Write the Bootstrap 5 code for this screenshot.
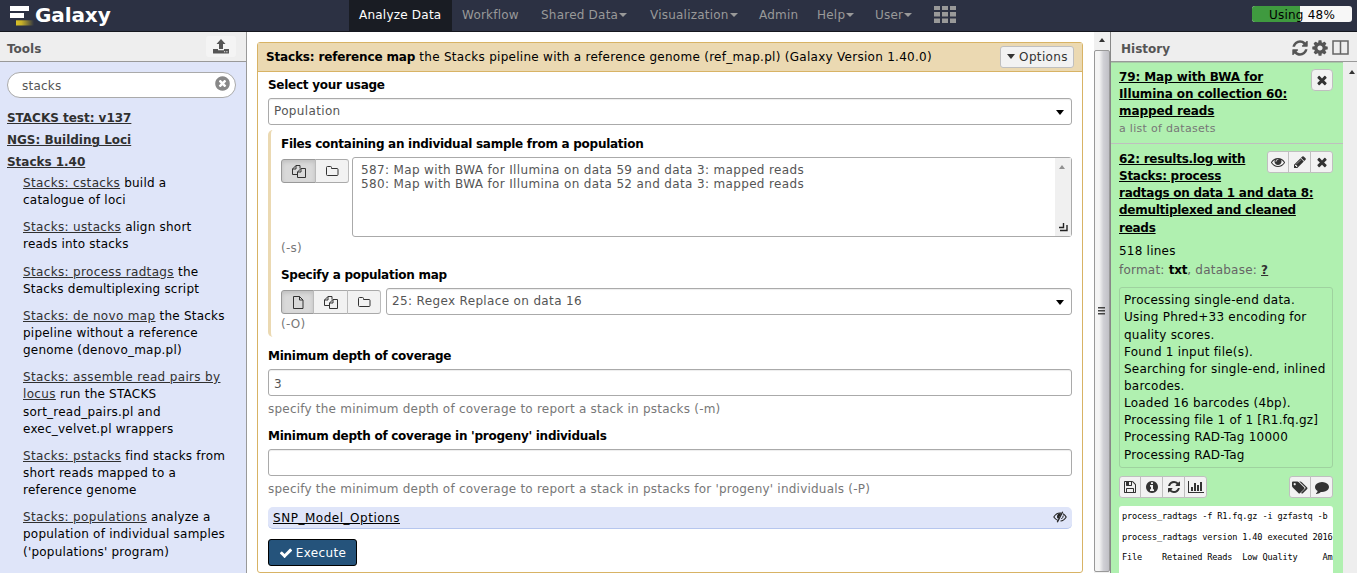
<!DOCTYPE html>
<html lang="en">
<head>
<meta charset="utf-8">
<meta name="viewport" content="width=device-width, initial-scale=1">
<title>Galaxy</title>
<link href="https://cdn.jsdelivr.net/npm/bootstrap@5.3.0/dist/css/bootstrap.min.css" rel="stylesheet">
<style>
body{font:12px/17.143px Verdana,"DejaVu Sans",sans-serif;letter-spacing:.22px;color:#000;background:#fff;height:573px;overflow:hidden}
svg{display:block;fill:currentColor}
.masthead{height:32px;background:#2c3143;border-bottom:1px solid #15171f}
.brand-name{font-size:20px;font-weight:700;line-height:30px;color:#fff;margin-left:1px;letter-spacing:-.1px}
.brand-side{width:349px;padding-left:9px}
.topnav .nav-link{color:#999;padding:0 0 0 10px;line-height:31px;height:31px;white-space:nowrap}
.topnav .nav-link.active{color:#fff;background:#191c23}
.w-a{width:103px}.w-b{width:79px}.w-c{width:109px}.w-d{width:58px}.w-e{width:59px}
.tri{display:inline-block;border:4px solid transparent;border-top-color:currentColor;border-bottom:0;vertical-align:2px;margin-left:1px}
.tri-lg{border-width:5px 4.5px 0}
.quota{width:100px;height:16px;background:#f7f7f7;border-radius:3px;margin:6px 5px 0 0;position:relative;font-size:12px}
.quota .progress-bar{background:#3f9a3f}
.quota-text{position:absolute;inset:0;text-align:center;line-height:19px;color:#000}
.workspace{height:541px}
.tools{width:247px;background:#dfe5f9;border-right:1px solid #999}
.panel-head{height:30px;background:#eee;border-bottom:1px solid #999;color:#555;font-weight:700;padding-top:9px;letter-spacing:0}
.upload-btn{width:30px;height:21px;background:#f4f4f4;border-radius:3px;margin:-5px 10px 0 0;padding:3px 0 0 7px}
.search-box{height:26px;border:1px solid #aaa;border-radius:13px;background:#fff;color:#555;margin:10px 10px 0 7px;padding:0 4px 0 14px}
.tool-cats{margin:9px 0 2px 7px;font-weight:700;line-height:22px;letter-spacing:-.02px}
.tool-cats a,.tool-item a{color:#303030;text-decoration:underline}
.tool-item a{letter-spacing:.34px}
.tool-item{margin:0 10px 10px 23px;white-space:nowrap}
.center{width:847px;padding:10px 11px 0 10px}
.toolform{height:531px;border:1px solid #d8b365;border-radius:3px}
.toolform-head{height:29px;background:#ebd9b2;border-bottom:1px solid #d8b365;padding:0 8px}
.tf-title{letter-spacing:.28px;padding-top:2px}
.tf-title b{letter-spacing:-.15px}
.btn-g{background:#f2f2f2;border:1px solid #bfbfbf;color:#333;border-radius:3px;font-size:12px;line-height:20px;padding:0}
.opt-btn{width:74px;letter-spacing:.35px}
.toolform-body{padding:4px 10px 0}
.lbl{font-weight:700;height:17px;line-height:19px;margin-bottom:5px;letter-spacing:-.27px}
.field{height:27px;border:1px solid #aaa;border-radius:3px;color:#555;padding:1px 7px 0 5px;box-shadow:inset 0 1px 1px rgba(0,0,0,.075);letter-spacing:.35px}
.hint{color:#777;height:17px;line-height:19px}
.nested{border-left:3px solid #ebd9b2;border-radius:5px 0 0 5px;padding:5px 0 5px 10px;margin:5px 0 10px;height:207px}
.multi{height:80px;border:1px solid #aaa;border-radius:3px;color:#555;margin-left:3px}
.multi-opts{padding:5px 8px;line-height:14px;letter-spacing:.35px}
.multi-bar{width:16px;background:#f0f0f0;padding:7px 0 4px 4px}
.seg{height:24px;margin-top:2px}
.seg .btn-g{padding:0;display:flex;align-items:center;justify-content:center;border-color:#aaa #bbb}
.seg .on{background:#d9d9d9;border-color:#999;box-shadow:inset 0 2px 4px rgba(0,0,0,.12)}
.snp{height:22px;background:#dfe5f9;border-bottom:1px solid #b6c6ee;border-radius:5px;margin:10px 0;padding:2px 5px 0 5px}
.snp a{color:#000;letter-spacing:.52px}
.exec{width:89px;height:27px;background:#25537b;border:1px solid #000;border-radius:3px;color:#fff;font-size:12px;padding:1px 0 0;letter-spacing:.35px}
.vbar{width:16px;background:#f0f0f0;padding-top:6px}
.vthumb{height:522px;margin-top:8px;border:1px solid #999;border-radius:2px;background:linear-gradient(90deg,#f5f5f5 30%,#d0d0d5 60%,#c0c0c6);color:#444;padding:256px 0 0 3px}
.uptri{display:block;width:0;border:3.5px solid transparent;border-bottom:4px solid #333;border-top:0;margin-left:5px}
.history{width:247px;border-left:1px solid #888;background:#eee}
.hist-scroll{width:14px;padding:8px 0 0 1px}
.hist-list{width:232px;background:#b0f0b0;height:511px}
.ds-one{height:82px;border-bottom:1px solid #bfbfbf;padding:6px 10px 0 8px;border-top:1px solid #a5c9a5}
.ds-two{padding:7px 10px 0 8px}
.ds-title{color:#000;font-weight:700;text-decoration:underline;white-space:nowrap;letter-spacing:-.26px}
.t-wide{letter-spacing:-.1px}
.bset{height:22px}
.bset .btn-g{width:22px;height:22px;flex:none;display:flex;align-items:center;justify-content:center}
.bset .btn-g+.btn-g{width:23px}
.peek{border:1px solid #9fd29f;border-radius:3px;height:181px;padding:4px;white-space:nowrap;margin-top:8px}
.cmd{font:8.6px/20.5px "DejaVu Sans Mono",monospace;letter-spacing:-.16px;background:#fff;height:70px;border-radius:3px 3px 0 0;margin:8px 0 0;padding:0 0 0 3px;overflow:hidden}
</style>
</head>
<body>
<svg class="d-none" xmlns="http://www.w3.org/2000/svg">
<symbol id="i-x" viewBox="0 0 1792 1792"><path d="M1490 1322q0 40-28 68l-136 136q-28 28-68 28t-68-28l-294-294-294 294q-28 28-68 28t-68-28l-136-136q-28-28-28-68t28-68l294-294-294-294q-28-28-28-68t28-68l136-136q28-28 68-28t68 28l294 294 294-294q28-28 68-28t68 28l136 136q28 28 28 68t-28 68l-294 294 294 294q28 28 28 68z"/></symbol>
<symbol id="i-check" viewBox="0 0 1792 1792"><path d="M1671 566q0 40-28 68l-724 724-136 136q-28 28-68 28t-68-28l-136-136-362-362q-28-28-28-68t28-68l136-136q28-28 68-28t68 28l294 295 656-657q28-28 68-28t68 28l136 136q28 28 28 68z"/></symbol>
<symbol id="i-refresh" viewBox="0 0 1792 1792"><path d="M1639 1056q0 5-1 7-64 268-268 434.5t-478 166.5q-146 0-282.5-55t-243.5-157l-129 129q-19 19-45 19t-45-19-19-45v-448q0-26 19-45t45-19h448q26 0 45 19t19 45-19 45l-137 137q71 66 161 102t187 36q134 0 250-65t186-179q11-17 53-117 8-23 30-23h192q13 0 22.5 9.5t9.5 22.5zm25-800v448q0 26-19 45t-45 19h-448q-26 0-45-19t-19-45 19-45l138-138q-148-137-349-137-134 0-250 65t-186 179q-11 17-53 117-8 23-30 23h-199q-13 0-22.5-9.5t-9.5-22.5v-7q65-268 270-434.5t480-166.5q146 0 284 55.5t245 156.5l130-129q19-19 45-19t45 19 19 45z"/></symbol>
<symbol id="i-cog" viewBox="0 0 1792 1792"><path d="M1152 896q0-106-75-181t-181-75-181 75-75 181 75 181 181 75 181-75 75-181zm512-109v222q0 12-8 23t-20 13l-185 28q-19 54-39 91 35 50 107 138 10 12 10 25t-9 23q-27 37-99 108t-94 71q-12 0-26-9l-138-108q-44 23-91 38-16 136-29 186-7 28-36 28h-222q-14 0-24.5-8.5t-11.5-21.5l-28-184q-49-16-90-37l-141 107q-10 9-25 9-14 0-25-11-126-114-165-168-7-10-7-23 0-12 8-23 15-21 51-66.5t54-70.5q-27-50-41-99l-183-27q-13-2-21-12.5t-8-23.5v-222q0-12 8-23t19-13l186-28q14-46 39-92-40-57-107-138-10-12-10-24 0-10 9-23 26-36 98.5-107.5t94.5-71.5q13 0 26 10l138 107q44-23 91-38 16-136 29-186 7-28 36-28h222q14 0 24.5 8.5t11.5 21.5l28 184q49 16 90 37l142-107q9-9 24-9 13 0 25 10 129 119 165 170 7 8 7 22 0 12-8 23-15 21-51 66.5t-54 70.5q26 50 41 98l183 28q13 2 21 12.5t8 23.5z"/></symbol>
<symbol id="i-eye" viewBox="0 0 1792 1792"><path d="M1664 960q-152-236-381-353 61 104 61 225 0 185-131.5 316.5t-316.5 131.5-316.5-131.5-131.5-316.5q0-121 61-225-229 117-381 353 133 205 333.5 326.5t434.5 121.5 434.5-121.5 333.5-326.5zm-720-384q0-20-14-34t-34-14q-125 0-214.5 89.5t-89.5 214.5q0 20 14 34t34 14 34-14 14-34q0-86 61-147t147-61q20 0 34-14t14-34zm848 384q0 34-20 69-140 230-376.5 368.5t-499.5 138.5-499.5-139-376.5-368q-20-35-20-69t20-69q140-229 376.5-368t499.5-139 499.5 139 376.5 368q20 35 20 69z"/></symbol>
<symbol id="i-pencil" viewBox="0 0 1792 1792"><path d="M491 1536l91-91-235-235-91 91v107h128v128h107zm523-928q0-22-22-22-10 0-17 7l-542 542q-7 7-7 17 0 22 22 22 10 0 17-7l542-542q7-7 7-17zm-54-192l416 416-832 832h-416v-416zm683 96q0 53-37 90l-166 166-416-416 166-165q36-38 90-38 53 0 91 38l235 234q37 39 37 91z"/></symbol>
<symbol id="i-save" viewBox="0 0 1792 1792"><path d="M512 1536h768v-384h-768v384zm896 0h128v-896q0-14-10-38.5t-20-34.5l-281-281q-10-10-34-20t-39-10v416q0 40-28 68t-68 28h-576q-40 0-68-28t-28-68v-416h-128v1280h128v-416q0-40 28-68t68-28h832q40 0 68 28t28 68v416zm-384-928v-320q0-13-9.5-22.5t-22.5-9.5h-192q-13 0-22.5 9.5t-9.5 22.5v320q0 13 9.5 22.5t22.5 9.5h192q13 0 22.5-9.5t9.5-22.5zm640 32v928q0 40-28 68t-68 28h-1344q-40 0-68-28t-28-68v-1344q0-40 28-68t68-28h928q40 0 88 20t76 48l280 280q28 28 48 76t20 88z"/></symbol>
<symbol id="i-info" viewBox="0 0 1792 1792"><path d="M1152 1376v-160q0-14-9-23t-23-9h-96v-512q0-14-9-23t-23-9h-320q-14 0-23 9t-9 23v160q0 14 9 23t23 9h96v320h-96q-14 0-23 9t-9 23v160q0 14 9 23t23 9h448q14 0 23-9t9-23zm-128-896v-160q0-14-9-23t-23-9h-192q-14 0-23 9t-9 23v160q0 14 9 23t23 9h192q14 0 23-9t9-23zm640 416q0 209-103 385.5t-279.5 279.5-385.5 103-385.5-103-279.5-279.5-103-385.5 103-385.5 279.5-279.5 385.5-103 385.5 103 279.5 279.5 103 385.5z"/></symbol>
<symbol id="i-chart" viewBox="0 0 2048 1792"><path d="M640 896v512h-256v-512h256zm384-512v1024h-256v-1024h256zm1024 1152v128h-2048v-1536h128v1408h1920zm-640-896v768h-256v-768h256zm384-384v1152h-256v-1152h256z"/></symbol>
<symbol id="i-clear" viewBox="0 0 1792 1792"><path d="M1277 1122q0-26-19-45l-181-181 181-181q19-19 19-45 0-27-19-46l-90-90q-19-19-46-19-26 0-45 19l-181 181-181-181q-19-19-45-19-27 0-46 19l-90 90q-19 19-19 46 0 26 19 45l181 181-181 181q-19 19-19 45 0 27 19 46l90 90q19 19 46 19 26 0 45-19l181-181 181 181q19 19 45 19 27 0 46-19l90-90q19-19 19-46zm387-226q0 209-103 385.5t-279.5 279.5-385.5 103-385.5-103-279.5-279.5-103-385.5 103-385.5 279.5-279.5 385.5-103 385.5 103 279.5 279.5 103 385.5z"/></symbol>
<symbol id="i-comment" viewBox="0 0 1792 1792"><path d="M1792 896q0 174-120 321.5t-326 233-450 85.5q-70 0-145-8-198 175-460 242-49 14-114 22-17 2-30.5-9t-17.5-29v-1q-3-4-.5-12t2-10 4.5-9.500l6-9 7-8.500 8-9q7-8 31-34.500t34.500-38 31-39.500 32.500-51 27-59 26-76q-157-89-247.500-220t-90.500-281q0-130 71-248.500t191-204.500 286-136.500 348-50.500q244 0 450 85.500t326 233 120 321.500z"/></symbol>
<symbol id="i-tags" viewBox="0 0 16 13"><path fill-rule="evenodd" d="M0 1.500Q0 .5 1 .5h4.300q.8 0 1.500.7l5.400 5.400q.6.7 0 1.300l-4.300 4.300q-.7.6-1.300 0L1 6.700Q0 5.800 0 5zM2.700 2a1.100 1.100 0 1 0 .01 0z"/><path d="M7.300.5h1q.8 0 1.500.7l5.400 5.400q.6.7 0 1.300l-4.300 4.300q-.7.6-1.500 0l-.3-.4 4.200-4.200q.6-.6 0-1.300z"/></symbol>
<symbol id="i-folder" viewBox="0 0 13 12"><path fill="none" stroke="currentColor" d="M.5 2.500q0-1 1-1h3q1 0 1 1v1h5.500q1 0 1 1v5q0 1-1 1h-9.500q-1 0-1-1z"/></symbol>
<symbol id="i-file" viewBox="0 0 12 13"><path fill="none" stroke="currentColor" d="M1.500.5h6l3.500 3.500v8.500h-9.500zM7.500.5v3.500h3.500"/></symbol>
<symbol id="i-files" viewBox="0 0 14 13"><path fill="none" stroke="currentColor" d="M5 9.500H.5V4L4 .5h4v3M.5 4H4V.5M5.500 7L9 3.500h4.500v9h-8zM5.500 7H9V3.500"/></symbol>
<symbol id="i-eyeoff" viewBox="0 0 14 12"><path fill="none" stroke="currentColor" stroke-width="1.100" d="M5 9.500Q2.500 8.500.8 6 3.200 2 7 2l1.300.1M10 2.800Q12 4 13.200 6 11 9.700 7.500 10"/><path d="M6.900 2.500a3 3 0 0 0-1.600 5.500L8 3z"/><path stroke="currentColor" stroke-width="1.300" d="M9.700.7L4.300 11.300"/><path fill="none" stroke="currentColor" d="M10.300 4.500Q10 7 8.300 8"/></symbol>
<symbol id="i-upload" viewBox="0 0 16 15"><path d="M8 0l4.500 5H10v5H6V5H3.500zM0 10h5v1.300h6V10h5v4q0 .5-.5.500H.5Q0 14.500 0 14z"/><path fill="#f4f4f4" d="M11 12.300h1.200v1H11zM13.300 12.300h1.200v1h-1.200z"/></symbol>
</svg>

<header class="masthead d-flex">
  <div class="brand-side d-flex">
    <svg class="mt-1" width="25" height="24" viewBox="0 0 25 24"><defs><linearGradient id="gold"><stop offset="0" stop-color="#d8c028"/><stop offset=".3" stop-color="#c8b128"/><stop offset="1" stop-color="#d8c028" stop-opacity="0"/></linearGradient></defs><path fill="#fff" d="M1 2h19v5H1zM1 9h14v5H1z"/><path fill="url(#gold)" d="M7 16.300h18v5.200H7z"/></svg>
    <span class="brand-name">Galaxy</span>
  </div>
  <nav class="topnav nav flex-nowrap">
    <a class="nav-link active w-a">Analyze Data</a><a class="nav-link w-b">Workflow</a><a class="nav-link w-c">Shared Data<i class="tri"></i></a><a class="nav-link w-c">Visualization<i class="tri"></i></a><a class="nav-link w-d">Admin</a><a class="nav-link w-d">Help<i class="tri"></i></a><a class="nav-link w-e">User<i class="tri"></i></a>
    <a class="nav-link"><svg class="mt-1" width="22" height="20" viewBox="0 0 22 20"><path d="M0 2h6v4H0zM8 2h6v4H8zM16 2h6v4h-6zM0 8h6v4.500H0zM8 8h6v4.500H8zM16 8h6v4.500h-6zM0 14.500h6v4.500H0zM8 14.500h6v4.500H8zM16 14.500h6v4.500h-6z"/></svg></a>
  </nav>
  <div class="quota ms-auto progress"><div class="progress-bar" style="width:48%"></div><span class="quota-text">Using 48%</span></div>
</header>

<div class="workspace d-flex">
  <aside class="tools flex-shrink-0 overflow-hidden">
    <div class="panel-head d-flex justify-content-between"><span style="margin-left:7px">Tools</span><span class="upload-btn"><svg width="16" height="15"><use href="#i-upload"/></svg></span></div>
    <div class="search-box d-flex align-items-center justify-content-between"><span class="pt-1">stacks</span><svg width="17" height="17" class="mb-1" color="#888"><use href="#i-clear"/></svg></div>
    <div class="tool-cats"><a href="#">STACKS test: v137</a><br><a href="#">NGS: Building Loci</a><br><a href="#">Stacks 1.40</a></div>
    <div class="tool-list">
      <div class="tool-item"><a href="#">Stacks: cstacks</a> build a<br>catalogue of loci</div>
      <div class="tool-item"><a href="#">Stacks: ustacks</a> align short<br>reads into stacks</div>
      <div class="tool-item"><a href="#">Stacks: process radtags</a> the<br>Stacks demultiplexing script</div>
      <div class="tool-item"><a href="#">Stacks: de novo map</a> the Stacks<br>pipeline without a reference<br>genome (denovo_map.pl)</div>
      <div class="tool-item"><a href="#">Stacks: assemble read pairs by<br>locus</a> run the STACKS<br>sort_read_pairs.pl and<br>exec_velvet.pl wrappers</div>
      <div class="tool-item"><a href="#">Stacks: pstacks</a> find stacks from<br>short reads mapped to a<br>reference genome</div>
      <div class="tool-item"><a href="#">Stacks: populations</a> analyze a<br>population of individual samples<br>('populations' program)</div>
    </div>
  </aside>

  <main class="center flex-shrink-0">
    <div class="toolform">
      <div class="toolform-head d-flex align-items-center justify-content-between"><span class="tf-title"><b>Stacks: reference map</b> the Stacks pipeline with a reference genome (ref_map.pl) (Galaxy Version 1.40.0)</span><button class="btn btn-g opt-btn"><i class="tri tri-lg me-1"></i>Options</button></div>
      <div class="toolform-body">
        <div class="lbl">Select your usage</div>
        <div class="field d-flex align-items-center justify-content-between"><span>Population</span><i class="tri tri-lg text-black"></i></div>
        <section class="nested">
          <div class="lbl">Files containing an individual sample from a population</div>
          <div class="d-flex">
            <div class="seg btn-group"><button class="btn btn-g on" style="width:35px"><svg width="14" height="13"><use href="#i-files"/></svg></button><button class="btn btn-g" style="width:34px"><svg width="13" height="12"><use href="#i-folder"/></svg></button></div>
            <div class="multi flex-grow-1 d-flex justify-content-between"><div class="multi-opts">587: Map with BWA for Illumina on data 59 and data 3: mapped reads<br>580: Map with BWA for Illumina on data 52 and data 3: mapped reads</div><div class="multi-bar d-flex flex-column justify-content-between"><i class="uptri ms-0 opacity-50"></i><svg width="9" height="9"><path fill="none" stroke="#222" stroke-width="1.400" d="M0 4.500h4.500V0M1 7.500h7V2"/></svg></div></div>
          </div>
          <div class="hint" style="margin:2px 0 10px">(-s)</div>
          <div class="lbl">Specify a population map</div>
          <div class="d-flex">
            <div class="seg btn-group"><button class="btn btn-g on" style="width:33px"><svg width="12" height="13"><use href="#i-file"/></svg></button><button class="btn btn-g" style="width:35px"><svg width="14" height="13"><use href="#i-files"/></svg></button><button class="btn btn-g" style="width:34px"><svg width="13" height="12"><use href="#i-folder"/></svg></button></div>
            <div class="field flex-grow-1 d-flex align-items-center justify-content-between" style="margin-left:5px"><span>25: Regex Replace on data 16</span><i class="tri tri-lg text-black"></i></div>
          </div>
          <div class="hint">(-O)</div>
        </section>
        <div class="lbl">Minimum depth of coverage</div>
        <div class="field d-flex align-items-center"><span class="pt-1">3</span></div>
        <div class="hint" style="margin:4px 0 10px">specify the minimum depth of coverage to report a stack in pstacks (-m)</div>
        <div class="lbl">Minimum depth of coverage in 'progeny' individuals</div>
        <div class="field"></div>
        <div class="hint" style="margin-top:4px">specify the minimum depth of coverage to report a stack in pstacks for 'progeny' individuals (-P)</div>
        <div class="snp d-flex align-items-center justify-content-between"><a href="#">SNP_Model_Options</a><svg width="14" height="12" color="#222" class="mb-1"><use href="#i-eyeoff"/></svg></div>
        <button class="btn exec d-flex align-items-center justify-content-center"><svg width="14" height="14" style="margin-right:3px"><use href="#i-check"/></svg><span>Execute</span></button>
      </div>
    </div>
  </main>
  <div class="vbar flex-shrink-0"><i class="uptri"></i><div class="vthumb"><svg width="7" height="8"><path d="M0 0h7v1.500H0zM0 3h7v1.500H0zM0 6h7v1.500H0z"/></svg></div></div>

  <aside class="history flex-shrink-0">
    <div class="panel-head d-flex justify-content-between"><span style="margin-left:10px">History</span><span class="d-flex" style="gap:2px;margin-right:8px;margin-top:-2px"><svg width="18" height="18"><use href="#i-refresh"/></svg><svg width="18" height="18"><use href="#i-cog"/></svg><svg style="margin:1px 0 0 1px" width="17" height="15" viewBox="0 0 17 15"><path fill="none" stroke="#666" stroke-width="1.500" d="M1 1h15v13H1zM8.500 1v13"/></svg></span></div>
    <div class="d-flex">
      <div class="hist-list overflow-hidden">
        <div class="ds-one d-flex justify-content-between">
          <div><a class="ds-title t-wide d-block">79: Map with BWA for<br>Illumina on collection 60:<br>mapped reads</a><span class="ds-sub" style="font-size:11px;color:#777;letter-spacing:.3px">a list of datasets</span></div>
          <div class="bset btn-group"><button class="btn btn-g rounded-1"><svg width="14" height="14"><use href="#i-x"/></svg></button></div>
        </div>
        <div class="ds-two">
          <div class="d-flex justify-content-between" style="height:87px"><a class="ds-title" style="width:140px">62: results.log with<br>Stacks: process<br>radtags on data 1 and data 8:<br>demultiplexed and cleaned<br>reads</a>
          <div class="bset btn-group"><button class="btn btn-g"><svg width="14" height="14"><use href="#i-eye"/></svg></button><button class="btn btn-g"><svg width="14" height="14"><use href="#i-pencil"/></svg></button><button class="btn btn-g"><svg width="14" height="14"><use href="#i-x"/></svg></button></div></div>
          <div style="margin-top:5px">518 lines</div>
          <div style="margin-top:2px;color:#666">format: <b class="text-black" style="letter-spacing:-.2px">txt</b>, database: <b class="text-decoration-underline" style="color:#303030">?</b></div>
          <div class="peek">Processing single-end data.<br>Using Phred+33 encoding for<br>quality scores.<br>Found 1 input file(s).<br>Searching for single-end, inlined<br>barcodes.<br>Loaded 16 barcodes (4bp).<br>Processing file 1 of 1 [R1.fq.gz]<br>Processing RAD-Tag 10000<br>Processing RAD-Tag</div>
          <div class="d-flex justify-content-between" style="margin-top:8px">
            <div class="bset btn-group"><button class="btn btn-g"><svg width="14" height="14"><use href="#i-save"/></svg></button><button class="btn btn-g"><svg width="14" height="14"><use href="#i-info"/></svg></button><button class="btn btn-g"><svg width="14" height="14"><use href="#i-refresh"/></svg></button><button class="btn btn-g"><svg width="16" height="14"><use href="#i-chart"/></svg></button></div>
            <div class="bset btn-group"><button class="btn btn-g"><svg width="16" height="13"><use href="#i-tags"/></svg></button><button class="btn btn-g"><svg width="14" height="14"><use href="#i-comment"/></svg></button></div>
          </div>
          <pre class="cmd">process_radtags -f R1.fq.gz -i gzfastq -b .
process_radtags version 1.40 executed 2016
File    Retained Reads  Low Quality     Am</pre>
        </div>
      </div>
      <div class="hist-scroll"><i class="uptri"></i></div>
    </div>
  </aside>
</div>
<script src="https://cdn.jsdelivr.net/npm/bootstrap@5.3.0/dist/js/bootstrap.bundle.min.js"></script>
</body>
</html>
